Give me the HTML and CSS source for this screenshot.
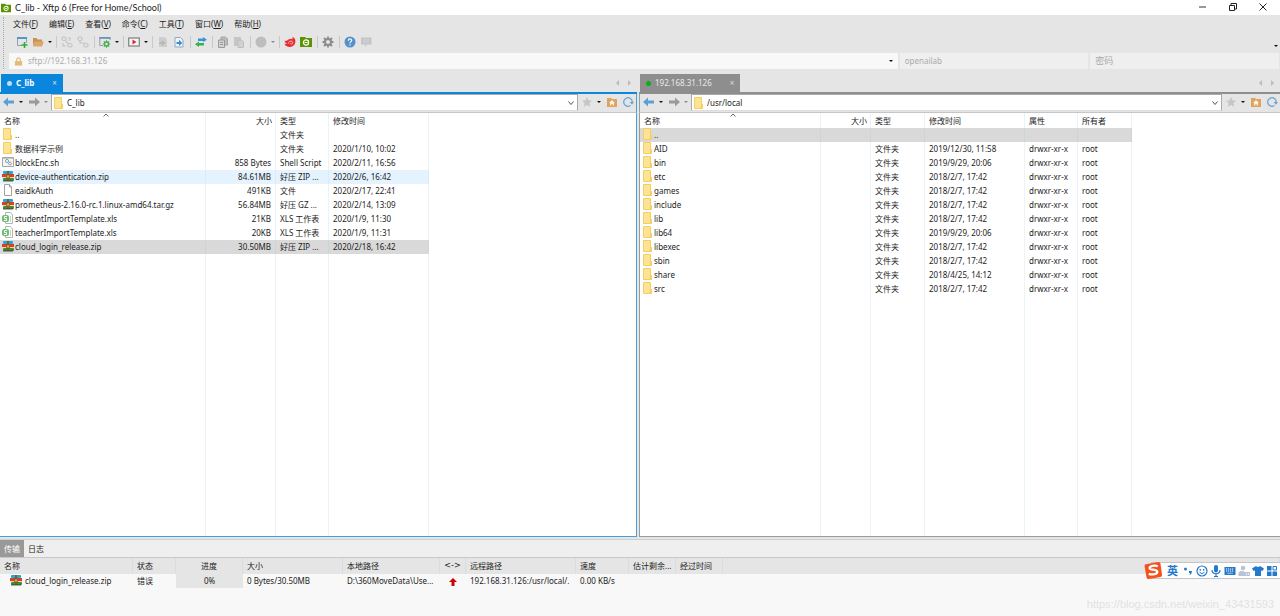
FILE: index.html
```html
<!DOCTYPE html>
<html lang="zh-CN">
<head>
<meta charset="utf-8">
<title>C_lib - Xftp 6 (Free for Home/School)</title>
<link rel="stylesheet" href="styles.css">
</head>
<body>
<svg class="sprite" aria-hidden="true">
  <symbol id="app" viewBox="0 0 12 12"><path d="M0 1h5l1 1h6v9H0z" fill="#5c9400"/><circle cx="6" cy="6.500" r="2.600" fill="none" stroke="#fff" stroke-width="1.200"/><path d="M4.500 6.500h3M7 4.500l2 .5" stroke="#fff"/></symbol>
  <symbol id="folder" viewBox="0 0 10 12"><path d="M.5.5h7v8l1-1v4h-8z" fill="#ffe394" stroke="#f3cf63"/><path d="M7 8.500L9 7v4.500H6.500z" fill="#f7cf5e"/></symbol>
  <symbol id="zip" viewBox="0 0 12 12"><rect x="1" y="1" width="10" height="3" rx="1" fill="#26a5d8"/><rect x="0" y="4" width="12" height="3" fill="#d3402f"/><rect x="0" y="7" width="12" height="1" fill="#f4d9b0"/><rect x="1" y="8" width="11" height="3" rx="1" fill="#3c8f36"/><path d="M6 1v10" stroke="#8a5a20" stroke-width="2"/><rect x="4.500" y="5" width="3" height="3" fill="#e0a841" stroke="#76501e" stroke-width=".6"/><path d="M1 11h10" stroke="#333" stroke-width=".8"/></symbol>
  <symbol id="file" viewBox="0 0 10 12"><path d="M1.500.5h5l2 2.500v8.500h-7z" fill="#fff" stroke="#a3a3a3"/><path d="M6.500.5V3h2" fill="none" stroke="#a3a3a3"/></symbol>
  <symbol id="sh" viewBox="0 0 12 12"><path d="M.5 1.500h11v9H.5z" fill="#f3f5f6" stroke="#a7a7a7"/><circle cx="5" cy="5" r="1.600" fill="none" stroke="#8ba5b5"/><circle cx="8" cy="7.500" r="1.400" fill="none" stroke="#8ba5b5"/><path d="M1 2.500h10" stroke="#c4c4c4"/></symbol>
  <symbol id="xls" viewBox="0 0 12 12"><path d="M3.500.5h5L10.500 3v8.500h-7z" fill="#fff" stroke="#b5b5b5"/><rect x="0" y="3" width="7" height="7" rx="2" fill="#6cc070"/><path d="M5 4.500H2.500v2h2v2H2" fill="none" stroke="#fff"/><path d="M8 5h1M8 7h1M8 9h1" stroke="#6cc070"/></symbol>
  <symbol id="left" viewBox="0 0 12 12"><path d="M0 6l5-4.500V4.500h6v3H5v3z" fill="#5d9fd6"/></symbol>
  <symbol id="right" viewBox="0 0 12 12"><path d="M12 6L7 1.500V4.500H1v3h6v3z" fill="#9a9a9a"/></symbol>
  <symbol id="star" viewBox="0 0 12 12"><path d="M6 1l1.500 3.300 3.500.4-2.600 2.400.7 3.600L6 9l-3.100 1.700.7-3.600L1 4.700l3.500-.4z" fill="#c6c6c6"/></symbol>
  <symbol id="home" viewBox="0 0 12 12"><path d="M1 2h4l1 1h5v8H1z" fill="#dca363"/><path d="M6 4l3 3H8v2.500H6.700V8H5.300v1.500H4V7H3z" fill="#fff2df"/></symbol>
  <symbol id="reload" viewBox="0 0 12 12"><path d="M8.500 9.500A4.300 4.300 0 1 1 10.300 6" fill="none" stroke="#6aa6d8" stroke-width="1.300"/><path d="M7.500 6H12L10 8.700z" fill="#6aa6d8"/></symbol>
  <symbol id="new" viewBox="0 0 12 12"><path d="M1.500 1.500h9V7M6 9.500H1.500v-8" fill="none" stroke="#8aa3b8"/><path d="M1 2h10" stroke="#5c93c2" stroke-width="2"/><path d="M8.500 6v6M5.500 9h6" stroke="#28ae34" stroke-width="1.500"/></symbol>
  <symbol id="open" viewBox="0 0 12 12"><path d="M1 2h3.500l1 1.500H10V6H3L1 10z" fill="#c79256"/><path d="M3 5.500h9L10 10.500H1z" fill="#dca769"/></symbol>
  <symbol id="link" viewBox="0 0 12 12"><g fill="none" stroke="#c3c3c3" stroke-width="1.200"><rect x="1" y="1" width="4" height="3.500" rx="1.500"/><rect x="7" y="7.500" width="4" height="3.500" rx="1.500"/><path d="M7 2h2v3M5 10H2V7M4.500 5l3 2.500"/></g></symbol>
  <symbol id="unlink" viewBox="0 0 12 12"><g fill="none" stroke="#c3c3c3" stroke-width="1.200"><rect x="1" y="1" width="4" height="3.500" rx="1.500"/><rect x="7" y="7.500" width="4" height="3.500" rx="1.500"/><path d="M3 4.500V7h5"/></g></symbol>
  <symbol id="prop" viewBox="0 0 12 12"><path d="M11 4V1.500H.8v8H4" fill="none" stroke="#9a9a9a"/><path d="M.3 2h11.200" stroke="#5c93c2" stroke-width="1.600"/><path d="M7.500 4.200v7.600M3.700 8h7.600M4.800 5.300l5.400 5.400M10.200 5.300l-5.400 5.400" stroke="#45b04d" stroke-width="1.200"/><circle cx="7.500" cy="8" r="2" fill="#e5e5e5" stroke="#45b04d" stroke-width="1.500"/></symbol>
  <symbol id="play" viewBox="0 0 12 12"><rect x=".7" y="2" width="10.600" height="8" fill="#f6f6f6" stroke="#888" stroke-width="1.300"/><path d="M4.500 3.500L8.500 6l-4 2.500z" fill="#e3262c"/></symbol>
  <symbol id="docgray" viewBox="0 0 12 12"><path d="M2 1h5.500L10 3.500V11H2z" fill="#cdcdcd"/><path d="M2 7h5M5 5l2.500 2L5 9" fill="none" stroke="#b5b5b5" stroke-width="1.300"/></symbol>
  <symbol id="docblue" viewBox="0 0 12 12"><path d="M2 1.500h5.500L10 4v7H2z" fill="#eef4fa" stroke="#8fa9c2"/><path d="M3.500 6H6V3.800L9.300 7 6 10V8H3.500z" fill="#3c8dd0"/></symbol>
  <symbol id="swap" viewBox="0 0 12 12"><path d="M3 2.500h5V1l4 2.700L8 6V5H3z" fill="#3793dd"/><path d="M9 7H4V5.500L0 8.300 4 11V9.500h5z" fill="#31b34d"/></symbol>
  <symbol id="copy" viewBox="0 0 12 12"><path d="M4 1h4.500l2 2v6H4z" fill="#bdbdbd" stroke="#a2a2a2"/><path d="M1.500 4h6v7.500h-6z" fill="#d2d2d2" stroke="#999"/><path d="M3 6.500h3M3 8.500h3" stroke="#999"/></symbol>
  <symbol id="paste" viewBox="0 0 12 12"><path d="M1 1h7v9H1z" fill="#c6c6c6"/><path d="M5 4h3.500l2 2v5.500H5z" fill="#d0d0d0" stroke="#bebebe"/></symbol>
  <symbol id="ball" viewBox="0 0 12 12"><circle cx="6" cy="6" r="5.500" fill="#bdbdbd"/></symbol>
  <symbol id="swirl" viewBox="0 0 12 12"><path d="M.5 4.500c1.500 1 2.500 0 4-1C6 2.500 7.500 2.500 8.500 3.300L8.300 1c2.500.8 3.500 3 3 5.500C10.800 9.500 8 11.200 5 11 2.500 10.700.8 9 .5 7.500 1.500 8 2.500 8 3 7.500 1.500 7 .7 6 .5 4.500z" fill="#e82d34"/><path d="M4.500 7.500c-.5-2.500 3.800-3.500 4.200-1 .2 1.700-2.200 2-2.400.7" fill="none" stroke="#fbdada" stroke-width=".8"/></symbol>
  <symbol id="gear" viewBox="0 0 12 12"><path d="M6 .5v11M.5 6h11M2 2l8 8M10 2l-8 8" stroke="#8b8b8b" stroke-width="1.800"/><circle cx="6" cy="6" r="3" fill="#e5e5e5" stroke="#8b8b8b" stroke-width="2"/></symbol>
  <symbol id="help" viewBox="0 0 12 12"><circle cx="6" cy="6" r="5.500" fill="#5590cc"/><path d="M4.300 4.700c0-2.400 3.600-2.200 3.400-.2C7.600 5.700 6 5.700 6 7.300M6 8.300v1.300" fill="none" stroke="#fff" stroke-width="1.200"/></symbol>
  <symbol id="chat" viewBox="0 0 12 12"><path d="M1 1.500h10.500v7H7L5 11V8.500H1z" fill="#c5c5c5"/><path d="M3 4h6M3 6h6" stroke="#d8d8d8" stroke-width=".8"/></symbol>
  <symbol id="lock" viewBox="0 0 10 10"><rect x="1" y="4.500" width="8" height="5" fill="#e5b97e"/><path d="M3 5V3a2 2 0 0 1 4 0v2" fill="none" stroke="#e5b97e" stroke-width="1.300"/></symbol>
  <symbol id="up" viewBox="0 0 8 8"><path d="M4 0l4 4H5.500v4h-3V4H0z" fill="#cf0000"/></symbol>
</svg>

<header class="titlebar">
  <svg class="ic" aria-hidden="true"><use href="#app"/></svg>
  <h1>C_lib - Xftp 6 (Free for Home/School)</h1>
  <div class="winbtns">
    <button aria-label="最小化"><svg viewBox="0 0 8 8"><path d="M0 4h7" stroke="#777" stroke-width="1.500"/></svg></button>
    <button aria-label="还原"><svg viewBox="0 0 8 8"><path d="M.5 2.500h5v5h-5zM2 2V.5h5.500V6H6" fill="none" stroke="#222"/></svg></button>
    <button aria-label="关闭"><svg viewBox="0 0 8 8"><path d="M.5.5l7 7M7.500.5l-7 7" stroke="#222"/></svg></button>
  </div>
</header>

<div class="bars">
  <nav class="menu">
    <button>文件(<u>F</u>)</button><button>编辑(<u>E</u>)</button><button>查看(<u>V</u>)</button><button>命令(<u>C</u>)</button><button>工具(<u>T</u>)</button><button>窗口(<u>W</u>)</button><button>帮助(<u>H</u>)</button>
  </nav>
  <div class="toolbar">
    <button class="tool" aria-label="新建"><svg class="ic"><use href="#new"/></svg></button>
    <button class="tool" aria-label="打开"><svg class="ic"><use href="#open"/></svg></button>
    <button class="caret" aria-label="打开选项"></button><i class="sep"></i>
    <button class="tool" aria-label="连接"><svg class="ic"><use href="#link"/></svg></button>
    <button class="tool" aria-label="断开"><svg class="ic"><use href="#unlink"/></svg></button><i class="sep"></i>
    <button class="tool" aria-label="属性"><svg class="ic"><use href="#prop"/></svg></button>
    <button class="caret" aria-label="属性选项"></button><i class="sep"></i>
    <button class="tool" aria-label="运行"><svg class="ic"><use href="#play"/></svg></button>
    <button class="caret" aria-label="运行选项"></button><i class="sep"></i>
    <button class="tool" aria-label="接收"><svg class="ic"><use href="#docgray"/></svg></button>
    <button class="tool" aria-label="发送"><svg class="ic"><use href="#docblue"/></svg></button><i class="sep"></i>
    <button class="tool" aria-label="同步"><svg class="ic"><use href="#swap"/></svg></button><i class="sep"></i>
    <button class="tool" aria-label="复制"><svg class="ic"><use href="#copy"/></svg></button>
    <button class="tool" aria-label="粘贴"><svg class="ic"><use href="#paste"/></svg></button><i class="sep"></i>
    <button class="tool" aria-label="编码"><svg class="ic"><use href="#ball"/></svg></button>
    <button class="caret dim" aria-label="编码选项"></button><i class="sep"></i>
    <button class="tool" aria-label="Xshell"><svg class="ic"><use href="#swirl"/></svg></button>
    <button class="tool" aria-label="Xftp"><svg class="ic"><use href="#app"/></svg></button><i class="sep"></i>
    <button class="tool" aria-label="设置"><svg class="ic"><use href="#gear"/></svg></button><i class="sep"></i>
    <button class="tool" aria-label="帮助"><svg class="ic"><use href="#help"/></svg></button>
    <button class="tool" aria-label="反馈"><svg class="ic"><use href="#chat"/></svg></button>
    <button class="caret end" aria-label="更多"></button>
  </div>
  <form class="address">
    <div class="field host"><svg class="lock" aria-hidden="true"><use href="#lock"/></svg><input aria-label="地址" placeholder="sftp://192.168.31.126"><button type="button" class="caret" aria-label="历史"></button></div>
    <div class="field cred"><input aria-label="用户名" placeholder="openailab"></div>
    <div class="field cred"><input class="pw" type="password" aria-label="密码" placeholder="密码"></div>
  </form>
</div>

<main class="panes">
  <section class="pane local">
    <div class="tabs">
      <button class="tab"><i class="dot"></i><b>C_lib</b><span class="x">×</span></button>
      <span class="scroll"><i class="tri l"></i><i class="tri r"></i></span>
    </div>
    <div class="nav">
      <button class="tool" aria-label="后退"><svg class="ic"><use href="#left"/></svg></button><button class="caret" aria-label="后退历史"></button>
      <button class="tool" aria-label="前进"><svg class="ic"><use href="#right"/></svg></button><button class="caret dim" aria-label="前进历史"></button>
      <div class="path"><svg class="fi" aria-hidden="true"><use href="#folder"/></svg><input aria-label="本地路径" value="C_lib"><button class="chev" aria-label="展开"><svg viewBox="0 0 8 8"><path d="M1.500 2.500L4 5.500l2.500-3" fill="none" stroke="#555"/></svg></button></div>
      <button class="tool" aria-label="收藏"><svg class="ic"><use href="#star"/></svg></button><button class="caret" aria-label="收藏列表"></button>
      <button class="tool" aria-label="主目录"><svg class="ic"><use href="#home"/></svg></button>
      <button class="tool" aria-label="刷新"><svg class="ic"><use href="#reload"/></svg></button>
    </div>
    <div class="list">
    <table class="files">
      <colgroup><col class="w-local"><col class="w70"><col class="w53"><col class="w100"><col></colgroup>
      <thead><tr><th>名称<svg class="sort" viewBox="0 0 6 4" aria-hidden="true"><path d="M.5 3.500L3 1l2.500 2.500" fill="none" stroke="#666"/></svg></th><th class="num">大小</th><th>类型</th><th>修改时间</th><td></td></tr></thead>
      <tbody>
      <tr><td><svg class="fi"><use href="#folder"/></svg>..</td><td></td><td>文件夹</td><td></td><td></td></tr>
      <tr><td><svg class="fi"><use href="#folder"/></svg>数据科学示例</td><td></td><td>文件夹</td><td>2020/1/10, 10:02</td><td></td></tr>
      <tr><td><svg class="fi"><use href="#sh"/></svg>blockEnc.sh</td><td class="num">858 Bytes</td><td>Shell Script</td><td>2020/2/11, 16:56</td><td></td></tr>
      <tr class="hover"><td><svg class="fi"><use href="#zip"/></svg>device-authentication.zip</td><td class="num">84.61MB</td><td>好压 ZIP ...</td><td>2020/2/6, 16:42</td><td></td></tr>
      <tr><td><svg class="fi"><use href="#file"/></svg>eaidkAuth</td><td class="num">491KB</td><td>文件</td><td>2020/2/17, 22:41</td><td></td></tr>
      <tr><td><svg class="fi"><use href="#zip"/></svg>prometheus-2.16.0-rc.1.linux-amd64.tar.gz</td><td class="num">56.84MB</td><td>好压 GZ ...</td><td>2020/2/14, 13:09</td><td></td></tr>
      <tr><td><svg class="fi"><use href="#xls"/></svg>studentImportTemplate.xls</td><td class="num">21KB</td><td>XLS 工作表</td><td>2020/1/9, 11:30</td><td></td></tr>
      <tr><td><svg class="fi"><use href="#xls"/></svg>teacherImportTemplate.xls</td><td class="num">20KB</td><td>XLS 工作表</td><td>2020/1/9, 11:31</td><td></td></tr>
      <tr class="sel"><td><svg class="fi"><use href="#zip"/></svg>cloud_login_release.zip</td><td class="num">30.50MB</td><td>好压 ZIP ...</td><td>2020/2/18, 16:42</td><td></td></tr>
      <tr class="fill"><td></td><td></td><td></td><td></td><td></td></tr>
      </tbody>
    </table>
    </div>
  </section>

  <section class="pane remote">
    <div class="tabs">
      <button class="tab"><i class="dot"></i><span>192.168.31.126</span><span class="x">×</span></button>
      <span class="scroll"><i class="tri l"></i><i class="tri r"></i></span>
    </div>
    <div class="nav">
      <button class="tool" aria-label="后退"><svg class="ic"><use href="#left"/></svg></button><button class="caret" aria-label="后退历史"></button>
      <button class="tool" aria-label="前进"><svg class="ic"><use href="#right"/></svg></button><button class="caret dim" aria-label="前进历史"></button>
      <div class="path"><svg class="fi" aria-hidden="true"><use href="#folder"/></svg><input aria-label="远程路径" value="/usr/local"><button class="chev" aria-label="展开"><svg viewBox="0 0 8 8"><path d="M1.500 2.500L4 5.500l2.500-3" fill="none" stroke="#555"/></svg></button></div>
      <button class="tool" aria-label="收藏"><svg class="ic"><use href="#star"/></svg></button><button class="caret" aria-label="收藏列表"></button>
      <button class="tool" aria-label="主目录"><svg class="ic"><use href="#home"/></svg></button>
      <button class="tool" aria-label="刷新"><svg class="ic"><use href="#reload"/></svg></button>
    </div>
    <div class="list">
    <table class="files">
      <colgroup><col class="w-remote"><col class="w50"><col class="w54"><col class="w100"><col class="w53"><col class="w54"><col></colgroup>
      <thead><tr><th>名称<svg class="sort" viewBox="0 0 6 4" aria-hidden="true"><path d="M.5 3.500L3 1l2.500 2.500" fill="none" stroke="#666"/></svg></th><th class="num">大小</th><th>类型</th><th>修改时间</th><th>属性</th><th>所有者</th><td></td></tr></thead>
      <tbody>
      <tr class="sel"><td><svg class="fi"><use href="#folder"/></svg>..</td><td></td><td></td><td></td><td></td><td></td><td></td></tr>
      <tr><td><svg class="fi"><use href="#folder"/></svg>AID</td><td></td><td>文件夹</td><td>2019/12/30, 11:58</td><td>drwxr-xr-x</td><td>root</td><td></td></tr>
      <tr><td><svg class="fi"><use href="#folder"/></svg>bin</td><td></td><td>文件夹</td><td>2019/9/29, 20:06</td><td>drwxr-xr-x</td><td>root</td><td></td></tr>
      <tr><td><svg class="fi"><use href="#folder"/></svg>etc</td><td></td><td>文件夹</td><td>2018/2/7, 17:42</td><td>drwxr-xr-x</td><td>root</td><td></td></tr>
      <tr><td><svg class="fi"><use href="#folder"/></svg>games</td><td></td><td>文件夹</td><td>2018/2/7, 17:42</td><td>drwxr-xr-x</td><td>root</td><td></td></tr>
      <tr><td><svg class="fi"><use href="#folder"/></svg>include</td><td></td><td>文件夹</td><td>2018/2/7, 17:42</td><td>drwxr-xr-x</td><td>root</td><td></td></tr>
      <tr><td><svg class="fi"><use href="#folder"/></svg>lib</td><td></td><td>文件夹</td><td>2018/2/7, 17:42</td><td>drwxr-xr-x</td><td>root</td><td></td></tr>
      <tr><td><svg class="fi"><use href="#folder"/></svg>lib64</td><td></td><td>文件夹</td><td>2019/9/29, 20:06</td><td>drwxr-xr-x</td><td>root</td><td></td></tr>
      <tr><td><svg class="fi"><use href="#folder"/></svg>libexec</td><td></td><td>文件夹</td><td>2018/2/7, 17:42</td><td>drwxr-xr-x</td><td>root</td><td></td></tr>
      <tr><td><svg class="fi"><use href="#folder"/></svg>sbin</td><td></td><td>文件夹</td><td>2018/2/7, 17:42</td><td>drwxr-xr-x</td><td>root</td><td></td></tr>
      <tr><td><svg class="fi"><use href="#folder"/></svg>share</td><td></td><td>文件夹</td><td>2018/4/25, 14:12</td><td>drwxr-xr-x</td><td>root</td><td></td></tr>
      <tr><td><svg class="fi"><use href="#folder"/></svg>src</td><td></td><td>文件夹</td><td>2018/2/7, 17:42</td><td>drwxr-xr-x</td><td>root</td><td></td></tr>
      <tr class="fill"><td></td><td></td><td></td><td></td><td></td><td></td><td></td></tr>
      </tbody>
    </table>
    </div>
  </section>
</main>

<footer class="transfer">
  <div class="ttabs"><button class="on">传输</button><button>日志</button></div>
  <table class="jobs">
    <colgroup><col class="w133"><col class="w43"><col class="w67"><col class="w100"><col class="w97"><col class="w26"><col class="w110"><col class="w53"><col class="w47"><col class="w47"><col></colgroup>
    <thead><tr><th>名称</th><th>状态</th><th class="mid">进度</th><th>大小</th><th>本地路径</th><th class="mid dir">&lt;-&gt;</th><th>远程路径</th><th>速度</th><th>估计剩余...</th><th>经过时间</th><td></td></tr></thead>
    <tbody><tr><td class="job"><svg class="fi"><use href="#zip"/></svg>cloud_login_release.zip</td><td>错误</td><td class="mid prog">0%</td><td>0 Bytes/30.50MB</td><td>D:\360MoveData\Use...</td><td class="mid"><svg class="up"><use href="#up"/></svg></td><td>192.168.31.126:/usr/local/.</td><td>0.00 KB/s</td><td></td><td></td><td></td></tr></tbody>
  </table>
  <div class="ime">
    <svg class="sogou" viewBox="0 0 20 20" aria-hidden="true"><path d="M2 3.500L15 1q2-.3 2.300 1.600L19 14.500q.2 2-1.700 2.300L5 19q-2 .2-2.300-1.700L.6 5.500Q.4 3.800 2 3.500z" fill="#f4511e"/><path d="M14.500 5.500C11 4 5.500 5.500 6 7.800c.5 2 8 .7 8 3.500 0 2.500-5 3.700-9 2.200" fill="none" stroke="#fff" stroke-width="2.400"/></svg>
    <span class="ying">英</span>
    <svg viewBox="0 0 12 12"><circle cx="3.500" cy="4" r="1.500"/><path d="M7 6h3q0 3-2.500 4L8 8H7z"/></svg>
    <svg viewBox="0 0 12 12"><circle cx="6" cy="6" r="5" fill="none" stroke="#2478cc" stroke-width="1.200"/><circle cx="4.300" cy="4.800" r=".9"/><circle cx="7.700" cy="4.800" r=".9"/><path d="M3.500 7.200q2.500 3 5 0" fill="none" stroke="#2478cc"/></svg>
    <svg viewBox="0 0 12 12"><rect x="4" y="0" width="4" height="7.500" rx="2"/><path d="M2 5c0 5 8 5 8 0M6 9v2.500M4 11.500h4" fill="none" stroke="#2478cc" stroke-width="1.200"/></svg>
    <svg viewBox="0 0 12 12"><path d="M.5 2h11v8H.5z"/><path d="M2 4h8M2 6h8M3.500 8.200h5" stroke="#fff" stroke-dasharray="1.200 .8"/></svg>
    <svg class="off" viewBox="0 0 12 12"><circle cx="5" cy="3" r="2.300"/><path d="M0 10q1-5 5-4l2 1v4H1zM7 7h5v4H7z"/><path d="M8.500 8v2M10.500 8v2" stroke="#fff" stroke-width=".6"/></svg>
    <svg viewBox="0 0 12 12"><path d="M4 1q2 2 4 0l4 2.500-1.500 2.500L9 5.500V11H3V5.500L1.500 6 0 3.500z"/></svg>
    <svg viewBox="0 0 12 12"><path d="M1 1h4.500v4.500H1zM1 6.500h4.500V11H1zM6.500 6.500H11V11H6.500z"/><path d="M7 1.500h3.500V5H7z" fill="none" stroke="#2478cc"/></svg>
  </div>
  <span class="mark">https://blog.csdn.net/weixin_43431593</span>
</footer>
</body>
</html>
```

FILE: styles.css
```css
* { box-sizing: border-box; }
body {
  margin: 0;
  height: 100vh;
  display: flex;
  flex-direction: column;
  overflow: hidden;
  background: #e5e5e5;
  color: #1c1c1c;
  font: 8px/14px "Noto Sans", "Noto Sans CJK SC", sans-serif;
}
button, input { font: inherit; color: inherit; background: none; border: 0; padding: 0; margin: 0; }
button { display: flex; align-items: center; justify-content: center; }
input { min-width: 0; flex: 1; outline: 0; }
.sprite { display: none; }
.ic { width: 12px; height: 12px; display: block; }

.titlebar { display: flex; align-items: center; height: 15px; background: #fff; padding-left: 1px; gap: 4px; flex: none; }
.titlebar .ic { width: 10px; height: 10px; }
.titlebar h1 { margin: 0; font: 400 9px/14px Lato, sans-serif; }
.winbtns { margin: -2px 2px 0 auto; display: flex; }
.winbtns button { width: 30px; height: 13px; }
.winbtns svg { width: 8px; height: 8px; }

.bars { flex: none; padding-bottom: 5px; position: relative; }
.bars::before { content: ""; position: absolute; left: 3px; top: 2px; bottom: 5px; border-left: 1px dotted #aaa; }
.menu { display: flex; padding: 2px 13px 0; gap: 11px; }
.toolbar { display: flex; align-items: center; height: 22px; padding-left: 14px; }
.tool { width: 16px; height: 16px; flex: none; }
.caret { width: 7px; height: 16px; flex: none; }
.caret::before { content: ""; border: 2px solid transparent; border-top-color: #111; border-bottom: 0; }
.caret.dim::before { border-top-color: #8c8c8c; }
.caret.end { margin: 7px 1px 0 auto; }
.sep { width: 6px; height: 12px; flex: none; background: linear-gradient(#c9c9c9, #c9c9c9) center / 1px 100% no-repeat; }
.address { display: flex; gap: 2px; padding: 0 1px 0 9px; }
.field { display: flex; align-items: center; height: 16px; background: #efefef; flex: 190 1 0; min-width: 0; }
.field.host { background: #f8f8f8; flex-grow: 887; padding: 0 3px 0 5px; }
.field input { align-self: stretch; padding-left: 5px; }
.field ::placeholder { color: #ababab; opacity: 1; }
.field .pw { font-size: 9px; }
.lock { width: 9px; height: 9px; }

.panes { flex: 1; min-height: 0; display: grid; grid-template-columns: 637fr 641fr; gap: 2px; padding-bottom: 2px; }
.pane { --line: #8e8e8e; --edge: #9b9b9b; display: flex; flex-direction: column; min-width: 0; min-height: 0; }
.local { --line: #0a86dc; --edge: #43a0dd; }
.tabs { display: flex; height: 20px; align-items: stretch; border-bottom: 2px solid var(--line); padding-left: 1px; flex: none; }
.tab { background: var(--line); color: #fff; padding: 0 6px; gap: 4px; }
.tab .x { margin-left: 14px; color: #ddd; }
.remote .tab { color: #e9e9e9; }
.dot { width: 5px; height: 5px; border-radius: 50%; background: #c3dff5; }
.remote .dot { background: #0fae17; }
.scroll { margin-left: auto; display: flex; align-items: center; gap: 9px; padding-right: 6px; }
.tri { border: 3px solid transparent; }
.tri.l { border-right-color: #bbb; border-left: 0; }
.tri.r { border-left-color: #bbb; border-right: 0; }
.nav { display: flex; align-items: center; height: 19px; padding: 0 0 1px 1px; flex: none; border-right: 1px solid var(--edge); border-bottom: 1px solid #c6c6c6; }
.remote .nav { border-right: 0; border-left: 1px solid var(--edge); }
.nav .caret { margin-right: 2px; }
.nav .tool, .nav .caret { margin-bottom: 2px; }
.path { display: flex; align-items: center; flex: 1; min-width: 0; height: 17px; background: #fff; border: 1px solid #aaa; border-bottom-color: #ddd; margin-right: 1px; padding-left: 1px; }
.path input { padding-left: 1px; height: 14px; }
.path .chev { width: 12px; height: 14px; }
.chev svg { width: 8px; height: 8px; }

.list { flex: 1; min-height: 0; background: #fff; border-right: 1px solid var(--edge); border-bottom: 1px solid var(--edge); }
.remote .list { border-right: 0; border-left: 1px solid var(--edge); }
table { border-collapse: separate; border-spacing: 0; table-layout: fixed; width: 100%; }
th, td { padding: 0 0 0 4px; text-align: left; font-weight: 400; white-space: nowrap; overflow: hidden; height: 14px; }
.files { height: 100%; }
.files td, .files th { border-right: 1px solid #eaf2fa; }
.files thead th { height: 15px; position: relative; }
.files tr > :last-child { border-right: 0; }
.files .num { text-align: right; padding-right: 4px; }
.files th.num { padding-right: 3px; }
.files td:first-child { padding-left: 2px; }
.files .fill td { height: auto; }
.files .hover td:not(:last-child) { background: #e5f3ff; border-color: #dcebf8; }
.files .sel td:not(:last-child) { background: #d9d9d9; border-color: #ccd4dc; }
.sort { position: absolute; left: 50%; top: 0; width: 6px; height: 4px; }
.fi { width: 12px; height: 12px; margin-right: 1px; vertical-align: top; flex: none; }
.remote td .fi { margin-right: 0; }
.w-local { width: 206px; }
.w-remote { width: 181px; }
.w26 { width: 26px; }
.w43 { width: 43px; }
.w47 { width: 47px; }
.w50 { width: 50px; }
.w53 { width: 53px; }
.w54 { width: 54px; }
.w67 { width: 67px; }
.w70 { width: 70px; }
.w97 { width: 97px; }
.w100 { width: 100px; }
.w110 { width: 110px; }
.w133 { width: 133px; }

.transfer { flex: none; position: relative; min-height: 77px; background: #f8f8f8; border-top: 1px solid #cfcfcf; }
.ttabs { display: flex; height: 18px; background: #efefef; border-bottom: 1px solid #c8c8c8; }
.ttabs button { padding: 0 4px; }
.ttabs .on { background: #999; color: #fff; }
.jobs thead > tr > * { height: 16px; background: #e5e5e5; border-right: 1px solid #d5dde6; }
.jobs td.job { padding-left: 10px; }
.job .fi { margin-right: 3px; }
.jobs .mid { text-align: center; padding: 0; }
.dir { font-family: "DejaVu Sans", sans-serif; }
.prog { background: #e5e5e5; }
.up { width: 8px; height: 8px; vertical-align: middle; }
.ime { position: absolute; right: 0; top: 22px; display: flex; align-items: center; height: 17px; gap: 2px; padding-right: 2px; background: #fff; border: 1px solid #c5c5c5; border-right: 0; fill: #2478cc; }
.ime svg { width: 12px; height: 12px; }
.ime .sogou { width: 19px; height: 19px; margin-left: -8px; }
.ime .off { fill: #b9c4d6; }
.ying { color: #2478cc; font-size: 11px; font-weight: 700; padding: 0 2px; }
.mark { position: absolute; right: 6px; bottom: 5px; font: 11px/14px "Liberation Sans", sans-serif; color: #e2e2e2; }
```
